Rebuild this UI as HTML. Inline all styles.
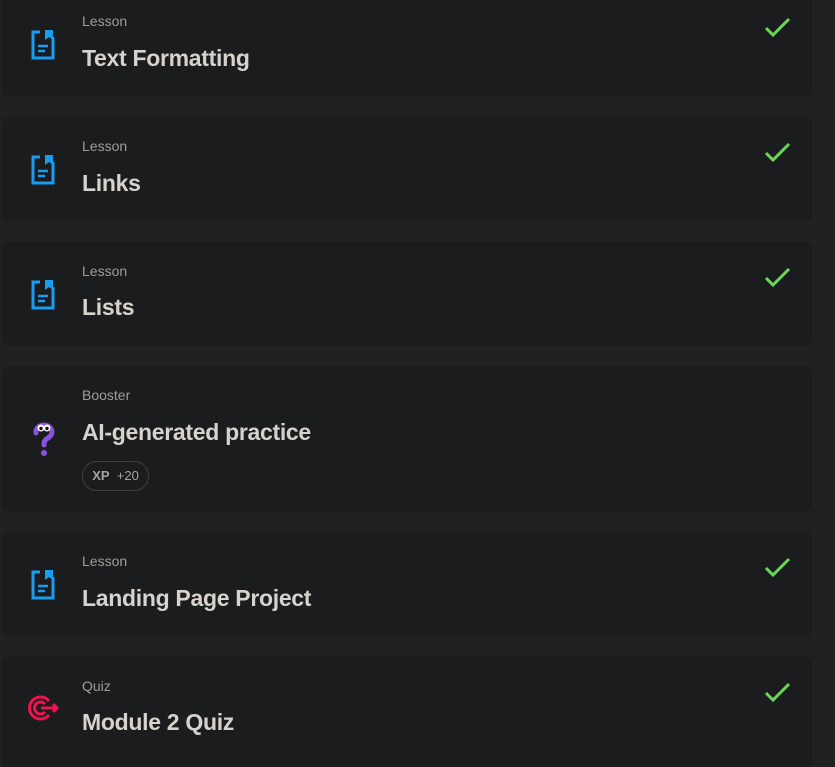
<!DOCTYPE html>
<html><head><style>
body{margin:0;background:#202123;width:835px;height:763px;overflow:hidden;position:relative;font-family:"Liberation Sans",sans-serif}
.c{position:absolute;left:2px;width:810px;background:#1b1c1e;border-radius:5px}
.l{position:absolute;left:80px;font-size:14px;color:#a29c96}
.t{position:absolute;left:80px;font-size:23px;line-height:26px;font-weight:bold;color:#d8d2cc;letter-spacing:-0.3px}
.i{position:absolute;left:28px}
.k{position:absolute;left:762px}
.b{position:absolute;left:80px;width:65px;height:28px;border:1px solid #3e3f42;border-radius:15px;color:#a9a39d;font-size:13px;line-height:28px;text-align:center}
</style></head><body>
<svg width="0" height="0" style="position:absolute"><defs>
<g id="doc"><path d="M10 3H3v26h20V8" fill="none" stroke="#1a9cf0" stroke-width="3"/><path d="M15 1h8v10l-4-3-4 3z" fill="#1a9cf0"/><path d="M8 17h10M8 22h7" stroke="#1a9cf0" stroke-width="2.5"/></g>
<g id="chk"><path d="M2 14l7 7L25 5" fill="none" stroke="#6bd656" stroke-width="3"/></g>
</defs></svg>

<div class="c" style="top:-8px;height:104px"><div class="l" style="top:21px">Lesson</div><div class="t" style="top:53px">Text Formatting</div><svg class="i" style="top:37px" width="26" height="32"><use href="#doc"/></svg><svg class="k" style="top:22px" width="28" height="26"><use href="#chk"/></svg></div>

<div class="c" style="top:117px;height:104px"><div class="l" style="top:21px">Lesson</div><div class="t" style="top:53px">Links</div><svg class="i" style="top:37px" width="26" height="32"><use href="#doc"/></svg><svg class="k" style="top:22px" width="28" height="26"><use href="#chk"/></svg></div>

<div class="c" style="top:242px;height:104px"><div class="l" style="top:21px">Lesson</div><div class="t" style="top:52px">Lists</div><svg class="i" style="top:37px" width="26" height="32"><use href="#doc"/></svg><svg class="k" style="top:22px" width="28" height="26"><use href="#chk"/></svg></div>

<div class="c" style="top:366px;height:145px"><div class="l" style="top:21px">Booster</div><div class="t" style="top:53px">AI-generated practice</div>
<svg class="i" style="top:56px;left:30px" width="24" height="36"><path d="M4 11a8 7 0 1 1 12 5c-3 2-4 3-4 7" fill="none" stroke="#8b52e0" stroke-width="5" stroke-linecap="round"/><circle cx="12" cy="31" r="3" fill="#8b52e0"/><circle cx="9" cy="6" r="3.5" fill="#fff"/><circle cx="15" cy="6" r="3.5" fill="#fff"/><circle cx="9" cy="6.5" r="1.7" fill="#111"/><circle cx="15" cy="6.5" r="1.7" fill="#111"/></svg>
<div class="b" style="top:95px"><b>XP</b>&nbsp; +20</div></div>

<div class="c" style="top:532px;height:104px"><div class="l" style="top:21px">Lesson</div><div class="t" style="top:53px">Landing Page Project</div><svg class="i" style="top:37px" width="26" height="32"><use href="#doc"/></svg><svg class="k" style="top:22px" width="28" height="26"><use href="#chk"/></svg></div>

<div class="c" style="top:657px;height:110px"><div class="l" style="top:21px">Quiz</div><div class="t" style="top:52px">Module 2 Quiz</div>
<svg class="i" style="top:36px;left:25px" width="34" height="30"><g fill="none" stroke="#f0124f" stroke-width="3"><path d="M22 8A11 11 0 1 0 22 22"/><path d="M18 11A6 6 0 1 0 18 19"/><path d="M14 15h16M26 11l4 4-4 4"/></g></svg>
<svg class="k" style="top:22px" width="28" height="26"><use href="#chk"/></svg></div>
</body></html>
